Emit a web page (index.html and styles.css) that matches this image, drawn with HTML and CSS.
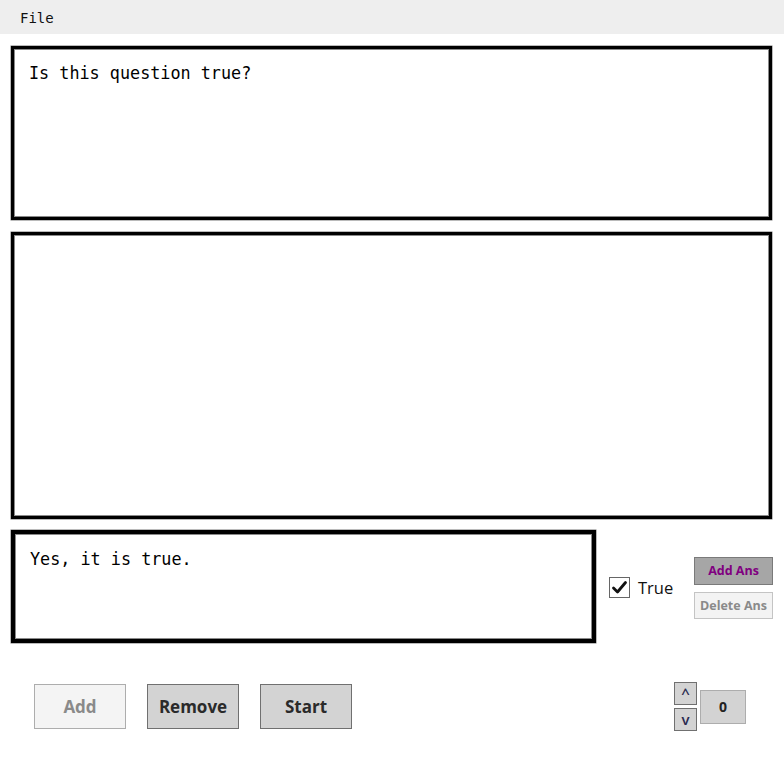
FILE: index.html
```html
<!DOCTYPE html>
<html>
<head>
<meta charset="utf-8">
<link rel="stylesheet" href="styles.css">
</head>
<body>
<div class="menubar"><span class="menu-item">File</span></div>
<div class="content">
  <div class="box question"><div class="mono">Is this question true?</div></div>
  <div class="box list"></div>
  <div class="answer-row">
    <div class="box answer"><div class="mono">Yes, it is true.</div></div>
    <div class="check">
      <span class="checkbox">
        <svg width="17" height="17" viewBox="0 0 17 17"><path d="M2.5 9 L6.5 13 L14.5 3.5" fill="none" stroke="#111" stroke-width="2.8" stroke-linecap="round" stroke-linejoin="round"/></svg>
      </span>
      <span class="check-label">True</span>
    </div>
    <div class="ans-buttons">
      <button class="small add-ans">Add Ans</button>
      <button class="small del-ans">Delete Ans</button>
    </div>
  </div>
  <div class="bottom-row">
    <div class="main-buttons">
      <button class="big disabled">Add</button>
      <button class="big">Remove</button>
      <button class="big">Start</button>
    </div>
    <div class="spinner">
      <div class="arrows">
        <button class="arrow">^</button>
        <button class="arrow">v</button>
      </div>
      <div class="counter">0</div>
    </div>
  </div>
</div>
</body>
</html>
```

FILE: styles.css
```css
html, body {
  margin: 0;
  padding: 0;
  background: #ffffff;
  width: 784px;
  height: 758px;
  overflow: hidden;
}
.menubar {
  height: 34px;
  background: #eeeeee;
  display: flex;
  align-items: center;
  padding-left: 20px;
}
.menu-item {
  font-family: "DejaVu Sans Mono", monospace;
  font-size: 14px;
  color: #111;
  padding-top: 2px;
}
.content {
  padding: 12px 12px 0 11px;
  display: flex;
  flex-direction: column;
}
.box {
  box-sizing: border-box;
  border: 3px solid #000;
  box-shadow: inset 1px 1px 0 #8a8a8a, inset -1px -1px 0 #8a8a8a, 0 0 0 0.5px #777;
  background: #fff;
}
.mono {
  font-family: "DejaVu Sans Mono", monospace;
  font-size: 16.8px;
  line-height: 20px;
  color: #000;
}
.question {
  height: 174px;
  padding: 14px 15px;
}
.list {
  margin-top: 12px;
  height: 287px;
}
.answer-row {
  margin-top: 11px;
  display: flex;
  align-items: center;
}
.answer {
  flex-shrink: 0;
  width: 585px;
  height: 113px;
  border-width: 4px;
  padding: 15px 15px;
}
.check {
  margin-left: 13px;
  display: flex;
  align-items: center;
  gap: 8px;
  padding-top: 2px;
}
.checkbox {
  box-sizing: border-box;
  width: 21px;
  height: 21px;
  border: 1px solid #666;
  background: #fff;
  display: flex;
  align-items: center;
  justify-content: center;
}
.check-label {
  font-family: "Open Sans", sans-serif;
  font-size: 16.5px;
  color: #111;
}
.ans-buttons {
  margin-left: auto;
  margin-right: -1px;
  display: flex;
  flex-direction: column;
  gap: 7px;
  padding-top: 2px;
}
.small {
  box-sizing: border-box;
  width: 79px;
  height: 27px;
  margin: 0;
  padding: 0;
  font-family: "Open Sans", sans-serif;
  font-weight: 700;
  font-size: 12.5px;
}
.add-ans {
  background: #a6a6a6;
  border: 1px solid #7a7a7a;
  color: #800080;
  height: 28px;
}
.del-ans {
  background: #f3f3f3;
  border: 1px solid #c4c4c4;
  color: #8a8a8a;
}
.bottom-row {
  margin-top: 41px;
  display: flex;
  justify-content: space-between;
  align-items: flex-start;
  padding-left: 23px;
  padding-right: 26px;
}
.main-buttons {
  display: flex;
  gap: 21px;
}
.big {
  box-sizing: border-box;
  width: 92px;
  height: 45px;
  margin: 0;
  padding: 0;
  background: #d3d3d3;
  border: 1px solid #707070;
  color: #2a2a2a;
  font-family: "Open Sans", sans-serif;
  font-weight: 700;
  font-size: 17px;
}
.big.disabled {
  background: #f4f4f4;
  border-color: #adadad;
  color: #8a8a8a;
}
.spinner {
  display: flex;
  align-items: center;
  gap: 3px;
  margin-top: -2px;
}
.arrows {
  display: flex;
  flex-direction: column;
  gap: 3px;
}
.arrow {
  box-sizing: border-box;
  width: 23px;
  height: 23px;
  margin: 0;
  padding: 0;
  background: #d3d3d3;
  border: 1px solid #707070;
  color: #2a2a50;
  font-family: "Open Sans", sans-serif;
  font-weight: 600;
  font-size: 15px;
  line-height: 1;
}
.counter {
  box-sizing: border-box;
  width: 46px;
  height: 34px;
  background: #d3d3d3;
  border: 1px solid #adadad;
  display: flex;
  align-items: center;
  justify-content: center;
  font-family: "Open Sans", sans-serif;
  font-weight: 700;
  font-size: 14px;
  color: #222;
}
```
